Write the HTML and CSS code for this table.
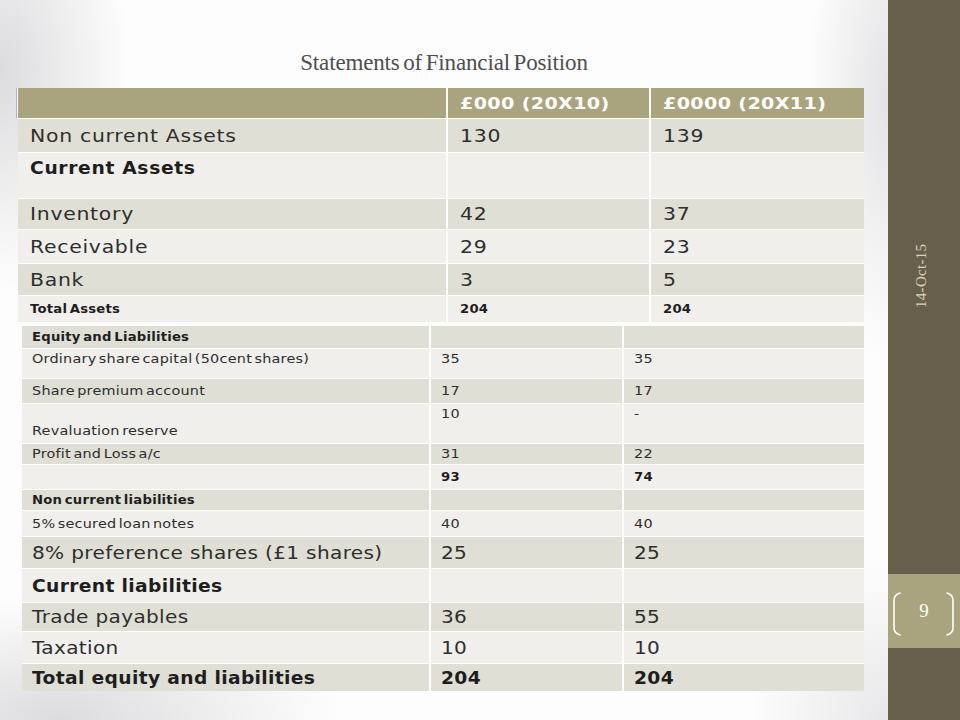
FILE: index.html
```html
<!DOCTYPE html>
<html>
<head>
<meta charset="utf-8">
<link rel="stylesheet" href="styles.css">
</head>
<body>
<div class="slide">
  <main class="content">
    <h1 class="title">Statements of Financial Position</h1>
    <div class="grid assets">
      <div class="c hd first"></div><div class="c hd th"><span>£000 (20X10)</span></div><div class="c hd th"><span>£0000 (20X11)</span></div>
      <div class="c dk big"><span>Non current Assets</span></div><div class="c dk big"><span>130</span></div><div class="c dk big"><span>139</span></div>
      <div class="c lt big b top"><span>Current Assets</span></div><div class="c lt"></div><div class="c lt"></div>
      <div class="c dk big"><span>Inventory</span></div><div class="c dk big"><span>42</span></div><div class="c dk big"><span>37</span></div>
      <div class="c lt big"><span>Receivable</span></div><div class="c lt big"><span>29</span></div><div class="c lt big"><span>23</span></div>
      <div class="c dk big"><span>Bank</span></div><div class="c dk big"><span>3</span></div><div class="c dk big"><span>5</span></div>
      <div class="c lt sm b"><span>Total Assets</span></div><div class="c lt sm b"><span>204</span></div><div class="c lt sm b"><span>204</span></div>
    </div>
    <div class="grid liab">
      <div class="c dk sm b"><span>Equity and Liabilities</span></div><div class="c dk"></div><div class="c dk"></div>
      <div class="c lt sm top"><span>Ordinary share capital (50cent shares)</span></div><div class="c lt sm top"><span>35</span></div><div class="c lt sm top"><span>35</span></div>
      <div class="c dk sm"><span>Share premium account</span></div><div class="c dk sm"><span>17</span></div><div class="c dk sm"><span>17</span></div>
      <div class="c lt sm bottom"><span>Revaluation reserve</span></div><div class="c lt sm top"><span>10</span></div><div class="c lt sm top"><span>-</span></div>
      <div class="c dk sm"><span>Profit and Loss a/c</span></div><div class="c dk sm"><span>31</span></div><div class="c dk sm"><span>22</span></div>
      <div class="c lt sm"></div><div class="c lt sm b"><span>93</span></div><div class="c lt sm b"><span>74</span></div>
      <div class="c dk sm b"><span>Non current liabilities</span></div><div class="c dk"></div><div class="c dk"></div>
      <div class="c lt sm"><span>5% secured loan notes</span></div><div class="c lt sm"><span>40</span></div><div class="c lt sm"><span>40</span></div>
      <div class="c dk mid"><span>8% preference shares (£1 shares)</span></div><div class="c dk mid"><span>25</span></div><div class="c dk mid"><span>25</span></div>
      <div class="c lt mid b"><span>Current liabilities</span></div><div class="c lt"></div><div class="c lt"></div>
      <div class="c dk mid"><span>Trade payables</span></div><div class="c dk mid"><span>36</span></div><div class="c dk mid"><span>55</span></div>
      <div class="c lt mid"><span>Taxation</span></div><div class="c lt mid"><span>10</span></div><div class="c lt mid"><span>10</span></div>
      <div class="c dk mid b"><span>Total equity and liabilities</span></div><div class="c dk mid b"><span>204</span></div><div class="c dk mid b"><span>204</span></div>
    </div>
  </main>
  <aside class="side">
    <div class="date">14-Oct-15</div>
    <div class="pageband">
      <svg class="brackets" width="72" height="74" viewBox="0 0 72 74">
        <path d="M12 19 Q6 21 6 26 L6 54 Q6 59 12 61" fill="none" stroke="#fff" stroke-width="1.6" stroke-linecap="round"/>
        <path d="M59 19 Q65 21 65 26 L65 54 Q65 59 59 61" fill="none" stroke="#fff" stroke-width="1.6" stroke-linecap="round"/>
      </svg>
      <span class="pagenum">9</span>
    </div>
  </aside>
</div>
</body>
</html>
```

FILE: styles.css
```css
* { box-sizing: border-box; }
html, body { margin: 0; padding: 0; }
body { width: 960px; height: 720px; overflow: hidden; }

.slide {
  display: flex;
  width: 960px;
  height: 720px;
}

.content {
  width: 888px;
  height: 720px;
  background:
    radial-gradient(ellipse 130px 220px at 0 70px, rgba(198,198,202,0.6), rgba(255,255,255,0) 100%),
    radial-gradient(ellipse 280px 120px at 60px 720px, rgba(198,198,202,0.6), rgba(255,255,255,0) 100%),
    radial-gradient(ellipse 80px 260px at 888px 100px, rgba(210,210,214,0.6), rgba(255,255,255,0) 100%),
    radial-gradient(ellipse 140px 160px at 888px 720px, rgba(210,210,214,0.5), rgba(255,255,255,0) 100%),
    #fdfdfd;
  padding-top: 50px;
}

.title {
  margin: 0 0 12px 0;
  height: 26px;
  line-height: 26px;
  text-align: center;
  font-family: "Liberation Serif", serif;
  font-weight: normal;
  font-size: 23px;
  letter-spacing: -0.15px;
  word-spacing: -2px;
  color: #4e4e4e;
}

.grid {
  display: grid;
  background: #ffffff;
  column-gap: 2px;
  row-gap: 1px;
  font-family: "DejaVu Sans", Verdana, sans-serif;
  color: #2e2e2e;
}

.assets {
  margin-left: 18px;
  width: 846px;
  grid-template-columns: 428px 201px 213px;
  grid-template-rows: 30px 33px 45px 30px 33px 31px 26px;
}

.liab {
  margin-left: 22px;
  margin-top: 4px;
  width: 842px;
  grid-template-columns: 407px 191px 240px;
  grid-template-rows: 22px 29px 24px 39px 20px 24px 20px 25px 31px 33px 28px 31px 27px;
}

.c {
  display: flex;
  align-items: center;
  padding-left: 12px;
  white-space: nowrap;
}
.liab .c { padding-left: 10px; }

.c span {
  display: inline-block;
  transform-origin: left center;
  transform: scaleX(1.2);
}
.c.mid span { transform: scaleX(1.18); }
.c.b span { transform: scaleX(1.1); }
.c.th span { transform: scaleX(1.16); }

.hd { background: #a9a47e; }
.first { box-shadow: -1px 0 0 0 #ffffff, -2px 0 0 0 #a4b3d6; }
.dk { background: #e0dfd6; }
.lt { background: #f0efeb; }

.th {
  color: #ffffff;
  font-weight: bold;
  font-size: 16.5px;
  letter-spacing: 0.3px;
}

.big { font-size: 17px; letter-spacing: 0.6px; }
.mid { font-size: 17px; letter-spacing: 0.3px; }
.sm { font-size: 12px; letter-spacing: 0.2px; word-spacing: -2px; }
.b { font-weight: bold; color: #1e1e1e; }

.top { align-items: flex-start; padding-top: 5px; }
.liab .top { padding-top: 3px; }
.bottom { align-items: flex-end; padding-bottom: 5px; }

.side {
  width: 72px;
  height: 720px;
  background: #675f4b;
  display: flex;
  flex-direction: column;
  align-items: center;
  padding-top: 242px;
}

.date {
  writing-mode: vertical-rl;
  transform: rotate(180deg);
  font-family: "Liberation Serif", serif;
  font-size: 15px;
  letter-spacing: 0.3px;
  color: #d9d4b9;
  height: 68px;
  text-align: center;
  margin-right: 6px;
}

.pageband {
  position: relative;
  margin-top: 264px;
  width: 72px;
  height: 74px;
  background: #a9a47e;
  display: flex;
  align-items: center;
  justify-content: center;
}

.brackets {
  position: absolute;
  left: 0;
  top: 0;
}

.pagenum {
  font-family: "Liberation Serif", serif;
  font-size: 19px;
  color: #ffffff;
}
```
